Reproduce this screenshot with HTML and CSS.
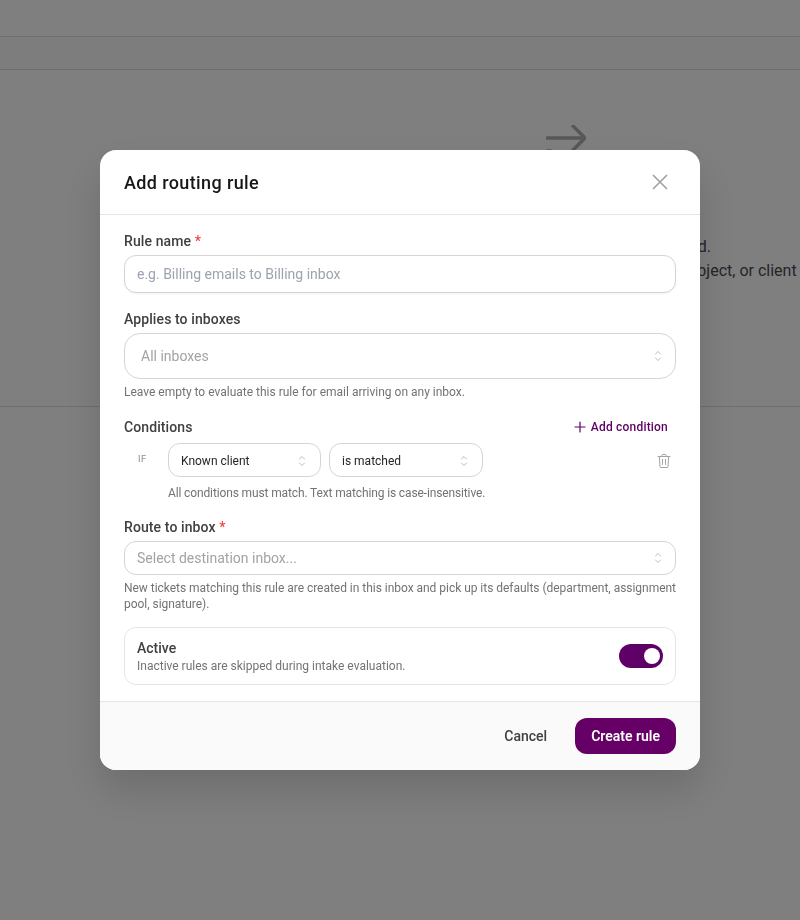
FILE: index.html
```html
<!DOCTYPE html>
<html lang="en">
<head>
<meta charset="utf-8">
<title>Add routing rule</title>
<link rel="stylesheet" href="styles.css">
</head>
<body>
<div class="page">
  <div class="topbar"></div>
  <div class="tabbar"></div>
  <div class="empty">
    <div class="empty-inner">
      <svg class="empty-icon" viewBox="0 0 40 40" width="40" height="40" fill="none" stroke="currentColor" stroke-width="3.5" stroke-linecap="round" stroke-linejoin="round"><path d="M1 13h38M27 1l12 12-12 12M1 26h4"/></svg>
      <p class="empty-title">No routing rules are currently configured.</p>
      <p class="empty-text">Create rules to route incoming tickets by sender, subject, or client</p>
    </div>
  </div>
</div>
<div class="overlay">
  <div class="modal">
    <header class="modal-head">
      <h2>Add routing rule</h2>
      <svg class="close" viewBox="0 0 24 24" width="24" height="24" fill="none" stroke="currentColor" stroke-width="1.7" stroke-linecap="round"><path d="M5.5 5.5l13 13M18.5 5.5l-13 13"/></svg>
    </header>
    <div class="modal-body">
      <div class="field f-name">
        <label>Rule name <span class="req">*</span></label>
        <div class="input"><span class="ph-blue">e.g. Billing emails to Billing inbox</span></div>
      </div>
      <div class="field f-inboxes">
        <label>Applies to inboxes</label>
        <div class="select-lg"><span class="ph">All inboxes</span>
          <svg class="chev" viewBox="0 0 10 16" width="10" height="16" fill="none" stroke="currentColor" stroke-width="1" stroke-linecap="round" stroke-linejoin="round"><path d="M2.5 6l2.5-2.5L7.5 6M2.5 10l2.5 2.5L7.5 10"/></svg>
        </div>
        <p class="hint">Leave empty to evaluate this rule for email arriving on any inbox.</p>
      </div>
      <div class="conditions">
        <div class="cond-head">
          <label>Conditions</label>
          <span class="add"><svg viewBox="0 0 12 12" width="12" height="12" fill="none" stroke="currentColor" stroke-width="1.2" stroke-linecap="round"><path d="M6 1v10M1 6h10"/></svg>Add condition</span>
        </div>
        <div class="cond-row">
          <span class="if">IF</span>
          <div class="pill"><span>Known client</span>
            <svg class="chev" viewBox="0 0 10 16" width="10" height="16" fill="none" stroke="currentColor" stroke-width="1" stroke-linecap="round" stroke-linejoin="round"><path d="M2.5 6l2.5-2.5L7.5 6M2.5 10l2.5 2.5L7.5 10"/></svg>
          </div>
          <div class="pill"><span>is matched</span>
            <svg class="chev" viewBox="0 0 10 16" width="10" height="16" fill="none" stroke="currentColor" stroke-width="1" stroke-linecap="round" stroke-linejoin="round"><path d="M2.5 6l2.5-2.5L7.5 6M2.5 10l2.5 2.5L7.5 10"/></svg>
          </div>
          <svg class="trash" viewBox="0 0 16 16" width="16" height="16" fill="none" stroke="currentColor" stroke-width="1" stroke-linecap="round" stroke-linejoin="round"><path d="M2 3.5h12M6 3.5V2.2c0-.4.3-.7.7-.7h2.6c.4 0 .7.3.7.7v1.3M3.4 3.5l.6 10.3c0 .4.4.7.8.7h6.4c.4 0 .8-.3.8-.7l.6-10.3M6.5 6.5v5M9.5 6.5v5"/></svg>
        </div>
        <p class="hint cond-hint">All conditions must match. Text matching is case-insensitive.</p>
      </div>
      <div class="field f-route">
        <label>Route to inbox <span class="req">*</span></label>
        <div class="select-md"><span class="ph">Select destination inbox...</span>
          <svg class="chev" viewBox="0 0 10 16" width="10" height="16" fill="none" stroke="currentColor" stroke-width="1" stroke-linecap="round" stroke-linejoin="round"><path d="M2.5 6l2.5-2.5L7.5 6M2.5 10l2.5 2.5L7.5 10"/></svg>
        </div>
        <p class="hint route-hint">New tickets matching this rule are created in this inbox and pick up its defaults (department, assignment pool, signature).</p>
      </div>
      <div class="active-card">
        <div>
          <div class="active-title">Active</div>
          <div class="active-sub">Inactive rules are skipped during intake evaluation.</div>
        </div>
        <div class="toggle"><span class="knob"></span></div>
      </div>
    </div>
    <footer class="modal-foot">
      <button class="btn-text">Cancel</button>
      <button class="btn-primary">Create rule</button>
    </footer>
  </div>
</div>
</body>
</html>
```
FILE: styles.css
```css
* { box-sizing: border-box; }
html, body { margin: 0; height: 100%; overflow: hidden; }
body { font-family: Roboto, "Liberation Sans", sans-serif; background: #fff; color: #1f2937; }
p, h2 { margin: 0; }
.page { height: 920px; display: flex; flex-direction: column; }
.topbar { height: 37px; border-bottom: 1px solid #dcdcdc; }
.tabbar { height: 33px; border-bottom: 1px solid #dcdcdc; background: #fbfafb; }
.empty { height: 337px; border-bottom: 1px solid #dcdcdc; padding: 52px 0 0 332px; white-space: nowrap; }
.empty-inner { width: 468px; display: flex; flex-direction: column; align-items: center; font-size: 16px; line-height: 24px; color: #4b4b55; }
.empty-icon { color: #b0b0b0; margin: 3px 0 70px; flex: none; }
.overlay { position: fixed; inset: 0; background: rgba(0,0,0,.5); display: flex; align-items: center; justify-content: center; }
.modal { width: 600px; height: 620px; background: #fff; border-radius: 16px; display: flex; flex-direction: column; overflow: hidden; box-shadow: 0 20px 40px rgba(0,0,0,.15); }
.modal-head { height: 65px; flex: none; border-bottom: 1px solid #e5e5e5; padding: 0 28px 0 24px; display: flex; align-items: center; justify-content: space-between; }
.modal-head h2 { font-size: 18px; font-weight: 500; letter-spacing: .38px; color: #171717; }
.close { color: #a3a3a3; }
.modal-body { flex: 1; padding: 16px 24px; display: flex; flex-direction: column; }
label { display: block; font-size: 14px; font-weight: 500; line-height: 20px; letter-spacing: .1px; color: #404040; }
.req { color: #ef4444; }
.input, .select-lg, .select-md { border: 1px solid #d4d4d4; background: #fff; display: flex; align-items: center; justify-content: space-between; font-size: 14px; }
.input { height: 38px; margin-top: 4px; border-radius: 12px; padding: 0 12px; box-shadow: 0 1px 2px rgba(0,0,0,.05); }
.ph-blue { color: #9ca3af; }
.ph { color: #a3a3a3; }
.f-inboxes { margin-top: 16px; }
.select-lg { height: 46px; margin-top: 4px; border-radius: 16px; padding: 0 12px 0 16px; }
.chev { color: #bdbdbd; flex: none; }
.hint { font-size: 12px; line-height: 16px; color: #737373; margin-top: 5px; }
.route-hint { letter-spacing: -.03px; }
.conditions { margin-top: 17px; }
.cond-head { display: flex; align-items: center; justify-content: space-between; height: 20px; }
.add { display: inline-flex; align-items: center; gap: 5px; font-size: 12px; font-weight: 500; letter-spacing: .2px; line-height: 20px; color: #5f0066; padding-right: 8px; }
.cond-row { display: flex; align-items: flex-start; margin-top: 6px; }
.if { width: 44px; padding: 9px 0 0 14px; font-size: 9px; font-weight: 500; letter-spacing: .4px; line-height: 14px; color: #a3a3a3; flex: none; }
.pill { width: 153px; height: 34px; border: 1px solid #d4d4d4; border-radius: 12px; display: flex; align-items: center; justify-content: space-between; padding: 1px 13px 0 12px; font-size: 12px; color: #262626; }
.pill + .pill { margin-left: 8px; width: 154px; }
.trash { color: #a3a3a3; margin: 10px 4px 0 auto; }
.cond-hint { margin: 8px 0 0 44px; letter-spacing: -.13px; }
.f-route { margin-top: 16px; }
.select-md { height: 34px; margin-top: 4px; border-radius: 12px; padding: 0 12px 0 12px; }
.active-card { margin-top: 15px; height: 58px; flex: none; border: 1px solid #e5e5e5; border-radius: 12px; padding: 0 12px; display: flex; align-items: center; justify-content: space-between; }
.active-title { font-size: 14px; font-weight: 500; line-height: 20px; color: #404040; }
.active-sub { font-size: 12px; line-height: 16px; color: #737373; }
.toggle { width: 44px; height: 24px; border-radius: 12px; background: #5f0066; display: flex; align-items: center; justify-content: flex-end; padding-right: 3px; }
.knob { width: 16px; height: 16px; border-radius: 50%; background: #fff; }
.modal-foot { height: 69px; flex: none; background: #fafafa; border-top: 1px solid #e5e5e5; padding: 0 24px; display: flex; align-items: center; justify-content: flex-end; gap: 12px; }
button { font: inherit; border: 0; cursor: pointer; font-size: 14px; font-weight: 500; }
.btn-text { background: none; height: 36px; padding: 0 16px; color: #404040; }
.btn-primary { background: #660066; color: #fff; height: 36px; padding: 0 16px; border-radius: 12px; font-weight: 600; }
```
